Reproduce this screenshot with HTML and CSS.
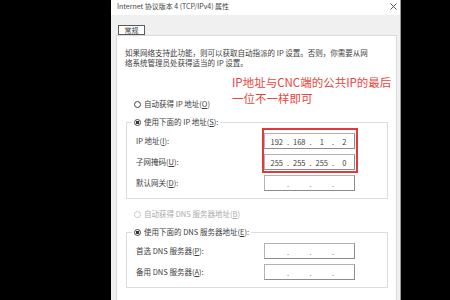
FILE: index.html
```html
<!DOCTYPE html>
<html lang="zh-CN">
<head>
<meta charset="utf-8">
<title>Internet 协议版本 4 (TCP/IPv4) 属性</title>
<link rel="stylesheet" href="styles.css">
</head>
<body>
<div class="window">
  <div class="titlebar">
    <span class="title">Internet 协议版本 4 (TCP/IPv4) 属性</span>
    <svg class="close" width="7" height="7" viewBox="0 0 7 7"><path d="M0.5 0.5 L6.5 6.5 M6.5 0.5 L0.5 6.5" stroke="#444" stroke-width="0.9" fill="none"/></svg>
  </div>
  <div class="tabs"><span class="tab">常规</span></div>
  <div class="panel">
    <p class="desc">如果网络支持此功能，则可以获取自动指派的 IP 设置。否则，你需要从网<br>络系统管理员处获得适当的 IP 设置。</p>

    <div class="radio-line first"><span class="radio"></span>自动获得 IP 地址(<u>O</u>)</div>

    <fieldset class="group ip-group">
      <legend><span class="radio checked"></span>使用下面的 IP 地址(<u>S</u>):</legend>
      <div class="row"><span class="label">IP 地址(<u>I</u>):</span>
        <span class="ipbox"><span class="seg">192</span><span class="dot">.</span><span class="seg">168</span><span class="dot">.</span><span class="seg">1</span><span class="dot">.</span><span class="seg">2</span></span></div>
      <div class="row"><span class="label">子网掩码(<u>U</u>):</span>
        <span class="ipbox"><span class="seg">255</span><span class="dot">.</span><span class="seg">255</span><span class="dot">.</span><span class="seg">255</span><span class="dot">.</span><span class="seg">0</span></span></div>
      <div class="row"><span class="label">默认网关(<u>D</u>):</span>
        <span class="ipbox empty"><span class="seg"></span><span class="dot">.</span><span class="seg"></span><span class="dot">.</span><span class="seg"></span><span class="dot">.</span><span class="seg"></span></span></div>
    </fieldset>

    <div class="radio-line disabled"><span class="radio"></span>自动获得 DNS 服务器地址(<u>B</u>)</div>

    <fieldset class="group dns-group">
      <legend><span class="radio checked"></span>使用下面的 DNS 服务器地址(<u>E</u>):</legend>
      <div class="row"><span class="label">首选 DNS 服务器(<u>P</u>):</span>
        <span class="ipbox empty"><span class="seg"></span><span class="dot">.</span><span class="seg"></span><span class="dot">.</span><span class="seg"></span><span class="dot">.</span><span class="seg"></span></span></div>
      <div class="row"><span class="label">备用 DNS 服务器(<u>A</u>):</span>
        <span class="ipbox empty"><span class="seg"></span><span class="dot">.</span><span class="seg"></span><span class="dot">.</span><span class="seg"></span><span class="dot">.</span><span class="seg"></span></span></div>
    </fieldset>
  </div>

  <div class="note">IP地址与CNC端的公共IP的最后<br>一位不一样即可</div>
  <div class="highlight"></div>
</div>
</body>
</html>
```

FILE: styles.css
```css
* { box-sizing: border-box; }

html, body {
  margin: 0;
  padding: 0;
  background: #000;
  width: 450px;
  height: 300px;
  overflow: hidden;
}

body {
  font-family: "Noto Sans CJK SC", "Noto Sans", sans-serif;
  font-size: 7.5px;
  color: #3c3c3c;
}

.window {
  position: relative;
  margin-left: 111px;
  width: 290px;
  height: 300px;
  background: #f0f0f0;
  border-right: 1px solid #9a9a9a;
  overflow: hidden;
}

.titlebar {
  height: 15px;
  background: #fff;
  display: flex;
  justify-content: space-between;
  align-items: flex-start;
  padding: 1px 3px 0 6px;
}

.title {
  font-size: 7px;
  line-height: 11px;
  color: #444;
}

.close {
  margin-top: 2px;
}

.tabs {
  padding: 10px 0 0 7px;
  height: 20px;
}

.tab {
  display: block;
  width: 27px;
  height: 10px;
  border: 1px solid #5a5a5a;
  background: #fff;
  line-height: 8px;
  text-align: center;
  font-size: 7px;
}

.panel {
  margin-left: 5px;
  width: 281px;
  height: 265px;
  background: #fff;
  border: 1px solid #dadada;
  border-bottom: none;
}

.desc {
  margin: 12px 8px 0 8px;
  line-height: 10px;
}

.radio-line {
  display: flex;
  align-items: center;
  height: 10px;
  line-height: 10px;
  margin-left: 17px;
}

.radio-line.first { margin-top: 31px; }
.radio-line.disabled { margin-top: 10px; color: #ababab; }

.radio {
  display: inline-block;
  width: 7px;
  height: 7px;
  border-radius: 50%;
  border: 1px solid #444;
  background: #fff;
  margin-right: 3px;
  flex: none;
}

.radio.checked {
  background: radial-gradient(circle, #333 0 1.6px, #fff 2px);
}

.disabled .radio { border-color: #c8c8c8; }

.group {
  margin: 8px 0 0 9px;
  width: 262px;
  border: 1px solid #dcdcdc;
  padding: 6px 32px 7px 9px;
  display: grid;
  row-gap: 5px;
  min-width: 0;
}

.group legend {
  display: flex;
  align-items: center;
  height: 10px;
  line-height: 10px;
  padding: 0 2px;
  margin-left: -4px;
}

.row {
  display: grid;
  grid-template-columns: 1fr 91px;
  height: 16px;
  align-items: center;
}

.label {
  line-height: 10px;
}

.ipbox {
  display: flex;
  align-items: center;
  height: 16px;
  width: 91px;
  border: 1px solid;
  border-color: #b2b2b2 #8c8c8c #8c8c8c #b2b2b2;
  background: #fff;
  padding-left: 2px;
  color: #3c3c3c;
}

.seg {
  flex: 1;
  text-align: center;
}

.dot {
  width: 3px;
  text-align: center;
}

.ipbox.empty .dot { color: #777; }

.note {
  position: absolute;
  left: 121px;
  top: 74px;
  font-size: 11.5px;
  line-height: 16px;
  color: #e8453c;
  white-space: nowrap;
}

.highlight {
  position: absolute;
  left: 151px;
  top: 128px;
  width: 96px;
  height: 45px;
  border: 2px solid #e23a3a;
}
```
